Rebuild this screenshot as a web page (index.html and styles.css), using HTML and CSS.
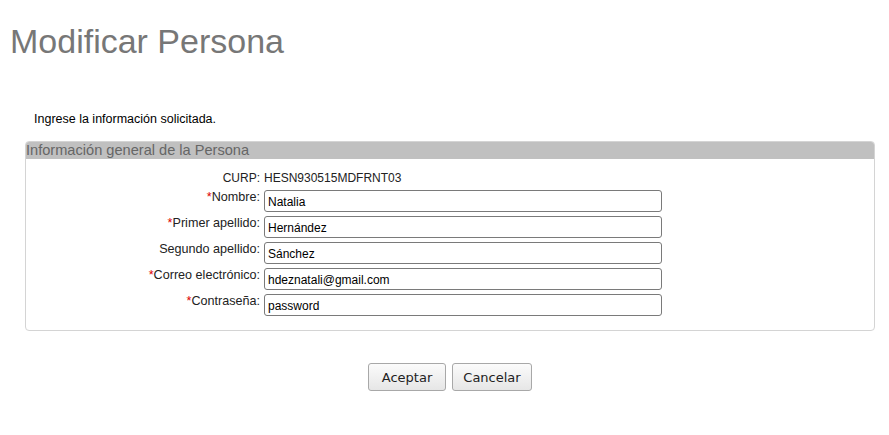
FILE: index.html
```html
<!DOCTYPE html>
<html lang="es">
<head>
<meta charset="utf-8">
<title>Modificar Persona</title>
<link rel="stylesheet" href="styles.css">
</head>
<body>
<h1 class="title">Modificar Persona</h1>
<p class="intro">Ingrese la información solicitada.</p>
<form class="form">
  <div class="panel">
    <div class="panel-head">Información general de la Persona</div>
    <div class="panel-body">
      <div class="label label-curp">CURP:</div>
      <div class="value">HESN930515MDFRNT03</div>
      <label class="label" for="n"><span class="req">*</span>Nombre:</label>
      <input class="field" id="n" type="text" value="Natalia">
      <label class="label" for="p"><span class="req">*</span>Primer apellido:</label>
      <input class="field" id="p" type="text" value="Hernández">
      <label class="label" for="s">Segundo apellido:</label>
      <input class="field" id="s" type="text" value="Sánchez">
      <label class="label" for="c"><span class="req">*</span>Correo electrónico:</label>
      <input class="field" id="c" type="text" value="hdeznatali@gmail.com">
      <label class="label" for="w"><span class="req">*</span>Contraseña:</label>
      <input class="field" id="w" type="text" value="password">
    </div>
  </div>
  <div class="actions">
    <button type="button" class="btn btn-ok">Aceptar</button>
    <button type="button" class="btn btn-cancel">Cancelar</button>
  </div>
</form>
</body>
</html>
```
FILE: styles.css
```css
html, body {
  margin: 0;
  padding: 0;
  background: #fff;
}
body {
  font-family: "Liberation Sans", Arial, sans-serif;
  color: #000;
}
.title {
  margin: 0;
  padding: 21px 0 0 10px;
  font-size: 34px;
  font-weight: normal;
  color: #777;
  line-height: 40px;
}
.intro {
  margin: 50px 0 0 34px;
  font-size: 12.5px;
  line-height: 16px;
}
.form {
  margin: 14px 14px 0 25px;
}
.panel {
  border: 1px solid #d4d4d4;
  border-radius: 4px;
  overflow: hidden;
}
.panel-head {
  background: #c0c0c0;
  color: #666;
  font-size: 14.6px;
  line-height: 17px;
  height: 17px;
}
.panel-body {
  display: grid;
  grid-template-columns: 234px 398px;
  column-gap: 4px;
  row-gap: 4px;
  align-items: start;
  padding: 12px 0 14px 0;
  font-size: 12px;
}
.label {
  text-align: right;
  color: #222;
  font-size: 12.6px;
  line-height: 15px;
}
.label-curp,
.value {
  font-size: 12px;
  line-height: 15px;
}
.value {
  color: #222;
}
.req {
  color: #d00;
}
.field {
  box-sizing: border-box;
  width: 398px;
  height: 22px;
  margin: 0;
  padding: 1px 3px 0;
  border: 1px solid #7a7a7a;
  border-radius: 3px;
  font-family: "Liberation Sans", Arial, sans-serif;
  font-size: 12px;
  color: #000;
  background: #fff;
}
.actions {
  display: flex;
  justify-content: center;
  gap: 6px;
  margin-top: 32px;
}
.btn {
  box-sizing: border-box;
  height: 28px;
  padding: 0;
  border: 1px solid #a8a8a8;
  border-radius: 3px;
  background: linear-gradient(#fbfbfb, #e6e6e6);
  font-family: "DejaVu Sans", sans-serif;
  font-size: 13px;
  color: #222;
}
.btn-ok {
  width: 78px;
}
.btn-cancel {
  width: 80px;
}
```
